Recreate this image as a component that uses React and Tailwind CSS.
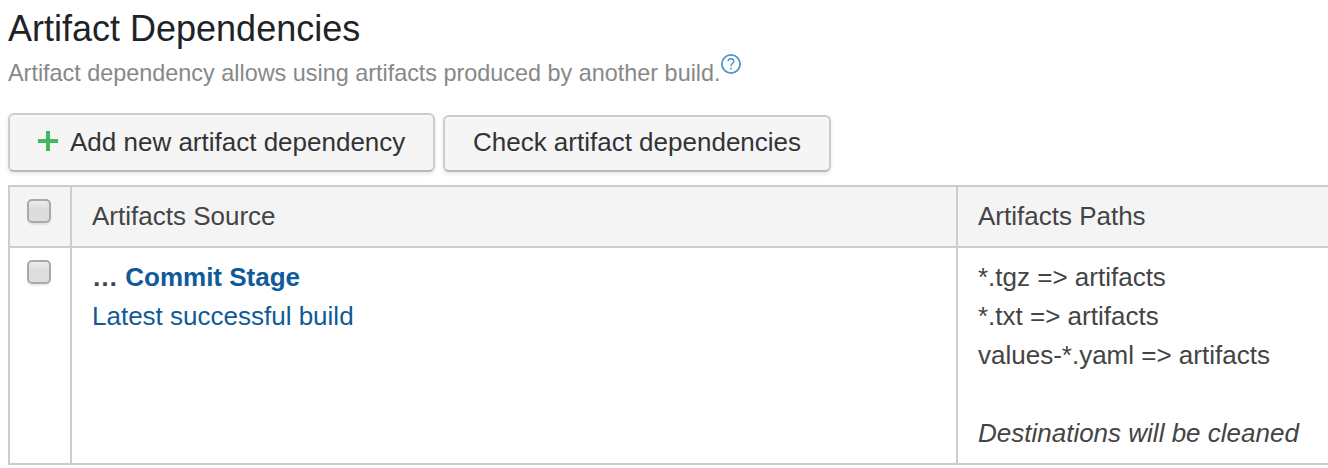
function Checkbox() {
  return (
    <span
      role="checkbox"
      aria-checked="false"
      className="block size-6 rounded-[5px] border-2 border-[#a9a9a9] bg-linear-to-b from-[#ededed] via-[#dcdcdc] via-40% to-[#dedede] shadow-[0_2px_1px_rgba(0,0,0,0.07)]"
    />
  );
}

function Button({ className, children }) {
  return (
    <button
      className={
        "flex items-center rounded-[6px] border-2 border-[#cccccc] border-b-[#b8b8b8] bg-[#f5f5f5] text-[26px] leading-[30px] whitespace-nowrap text-[#333333] shadow-[inset_0_2px_0_#f9f9f9,0_2px_4px_rgba(0,0,0,0.1)] " +
        className
      }
    >
      {children}
    </button>
  );
}

export default function App() {
  return (
    <main className="h-[468px] w-[1328px] overflow-hidden bg-white pl-2 font-['Liberation_Sans',Arial,sans-serif] text-[26px] leading-[39px] text-[#444444]">
      <h2 className="pt-2 text-[36px] leading-[42px] font-normal text-[#1f2326]">Artifact Dependencies</h2>
      <div className="flex h-[63px] items-start text-[23.4px] leading-[27px] text-[#888888]">
        <p className="pt-[10px] whitespace-nowrap">
          Artifact dependency allows using artifacts produced by another build.
        </p>
        <svg className="mt-[3px] -ml-px size-[22px] shrink-0" viewBox="0 0 22 22" fill="none" stroke="#4a98c9">
          <circle cx="11" cy="11" r="9.1" strokeWidth="1.8" />
          <path d="M8 8.3Q8.2 5.8 11 5.8Q13.8 5.8 13.8 8.2Q13.8 9.5 12.5 10.3Q11 11.3 11 13.2" strokeWidth="1.4" />
          <path d="M11 14.8v1.8" strokeWidth="1.7" />
        </svg>
      </div>
      <div className="flex items-end gap-2">
        <Button className="h-[59px] w-[427px] pb-px pl-7">
          <svg className="mr-3 mb-0.5 size-5" viewBox="0 0 20 20" shapeRendering="crispEdges">
            <path d="M8 0h4v8h8v4h-8v8H8v-8H0V8h8z" fill="#3fb95d" />
          </svg>
          Add new artifact dependency
        </Button>
        <Button className="h-[57px] w-[388px] justify-center pb-[3px]">Check artifact dependencies</Button>
      </div>
      <table className="mt-[13px] w-[1400px] table-fixed border-separate border-spacing-0 border-t-2 border-l-2 border-[#cccccc] text-left">
        <colgroup>
          <col className="w-[62px]" />
          <col className="w-[886px]" />
          <col />
        </colgroup>
        <thead>
          <tr className="h-[61px] bg-[#f4f4f4]">
            <th className="border-r-2 border-b-2 border-[#cccccc] p-0 pt-3 pl-[17px] align-top">
              <Checkbox />
            </th>
            <th className="border-r-2 border-b-2 border-[#cccccc] p-0 pl-5 font-normal">Artifacts Source</th>
            <th className="border-b-2 border-[#cccccc] p-0 pl-5 font-normal">Artifacts Paths</th>
          </tr>
        </thead>
        <tbody>
          <tr className="h-[217px]">
            <td className="border-r-2 border-b-2 border-[#cccccc] p-0 pt-3 pl-[17px] align-top">
              <Checkbox />
            </td>
            <td className="border-r-2 border-b-2 border-[#cccccc] p-0 pt-[10px] pl-5 align-top">
              <div className="font-bold">
                … <a className="text-[#0f5b99]">Commit Stage</a>
              </div>
              <a className="block text-[#0f5b99]">Latest successful build</a>
            </td>
            <td className="border-b-2 border-[#cccccc] p-0 pt-[10px] pl-5 align-top">
              <div>*.tgz =&gt; artifacts</div>
              <div>*.txt =&gt; artifacts</div>
              <div>values-*.yaml =&gt; artifacts</div>
              <div className="mt-[39px] italic">Destinations will be cleaned</div>
            </td>
          </tr>
        </tbody>
      </table>
    </main>
  );
}
